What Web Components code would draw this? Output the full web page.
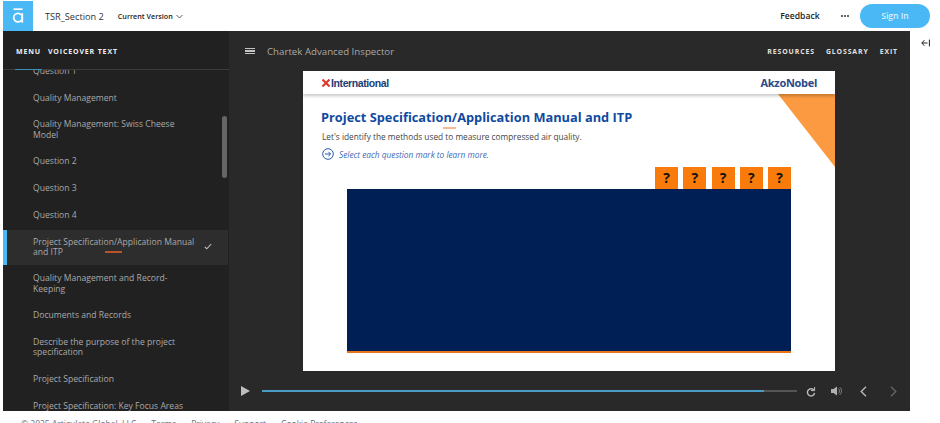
<!DOCTYPE html>
<html>
<head>
<meta charset="utf-8">
<title>TSR_Section 2</title>
<style>
    html, body { margin: 0; height: 423px; overflow: hidden; background: #ffffff; }
    body { font-family: "Open Sans", "Liberation Sans", sans-serif; display: flex; flex-direction: column; }
</style>
</head>
<body>
<top-bar></top-bar>
<div style="display:flex;height:380px;padding-left:3px;">
    <course-menu>
        <menu-item>Question 1</menu-item>
        <menu-item>Quality Management</menu-item>
        <menu-item>Quality Management: Swiss Cheese Model</menu-item>
        <menu-item>Question 2</menu-item>
        <menu-item>Question 3</menu-item>
        <menu-item>Question 4</menu-item>
        <menu-item active>Project Specification/Application Manual and ITP</menu-item>
        <menu-item>Quality Management and Record-Keeping</menu-item>
        <menu-item>Documents and Records</menu-item>
        <menu-item>Describe the purpose of the project specification</menu-item>
        <menu-item>Project Specification</menu-item>
        <menu-item>Project Specification: Key Focus Areas</menu-item>
    </course-menu>
    <player-pane></player-pane>
    <side-rail></side-rail>
</div>
<page-footer></page-footer>

<script>
class TopBar extends HTMLElement {
    connectedCallback() {
        this.attachShadow({mode: 'open'});
        this.shadowRoot.innerHTML = `
        <style>
            :host { display: flex; align-items: center; height: 31px; padding: 1px 10px 0 3px; box-sizing: border-box; color: #222; flex: none; }
            .logo { width: 30px; height: 30px; background: #4ab8f5; display: flex; align-items: center; justify-content: center; }
            .title { margin-left: 12px; font-size: 9.2px; color: #333; }
            .version { margin-left: 14px; font-size: 7.2px; font-weight: 600; display: flex; align-items: center; gap: 3px; }
            .spacer { flex: 1; }
            .feedback { font-size: 8.6px; font-weight: 600; }
            .dots { margin: 0 11px 0 21px; display: flex; gap: 1.2px; }
            .dots i { width: 2px; height: 2px; border-radius: 50%; background: #333; }
            .signin { width: 70px; height: 24px; border-radius: 12px; background: #4ab8f5; color: #d8f0fd; font-size: 8.6px; font-weight: 600; display: flex; align-items: center; justify-content: center; }
        </style>
        <div class="logo">
            <svg width="14" height="16" viewBox="0 0 14 16" fill="none" stroke="#fff" stroke-width="1.7">
                <path d="M2.5 1.2H11.5"/>
                <circle cx="7" cy="9.6" r="4.3"/>
                <path d="M11.3 5.2V14.6"/>
            </svg>
        </div>
        <span class="title">TSR_Section 2</span>
        <span class="version">Current Version
            <svg width="7" height="5" viewBox="0 0 7 5" fill="none" stroke="#333" stroke-width=".8"><path d="M.5 1l3 3 3-3"/></svg>
        </span>
        <span class="spacer"></span>
        <span class="feedback">Feedback</span>
        <span class="dots"><i></i><i></i><i></i></span>
        <span class="signin">Sign In</span>`;
    }
}

class CourseMenu extends HTMLElement {
    connectedCallback() {
        this.attachShadow({mode: 'open'});
        this.shadowRoot.innerHTML = `
        <style>
            :host { display: flex; flex-direction: column; width: 226px; flex: none; background: #212121; position: relative; overflow: hidden; }
            .tabs { flex: none; height: 39px; box-sizing: border-box; display: flex; gap: 7px; padding: 15.5px 0 0 13px; border-bottom: 1px solid #3c3c3c; position: relative;
                font-size: 7px; font-weight: 700; letter-spacing: .85px; color: #efefef; line-height: 10px; background: #212121; z-index: 1; }
            .tabs::after { content: ""; position: absolute; left: 12px; bottom: -1px; width: 27px; height: 1px; background: #3e8fb8; }
            .list { flex: 1; overflow: hidden; }
            .inner { margin-top: -12.5px; }
            .thumb { position: absolute; left: 219px; top: 85px; width: 5px; height: 62px; border-radius: 3px; background: #666; }
        </style>
        <div class="tabs"><span>MENU</span><span>VOICEOVER TEXT</span></div>
        <div class="list"><div class="inner"><slot></slot></div></div>
        <div class="thumb"></div>`;
    }
}

class MenuItem extends HTMLElement {
    connectedCallback() {
        this.attachShadow({mode: 'open'});
        this.shadowRoot.innerHTML = `
        <style>
            :host { display: flex; align-items: center; box-sizing: border-box; position: relative; width: 225px; min-height: 27px; padding: 7.75px 40px 7.75px 30px; font-size: 8.6px; line-height: 10.5px; color: #a9a9a9; }
            :host([active]) { margin: .75px 0; min-height: 35px; padding: 7px 32px 7px 30px; background: #2d2d2d; }
            :host([active]) .bar { position: absolute; left: 0; top: 0; bottom: 0; width: 4px; background: #4ab8f5; }
            :host([active]) .mark { position: absolute; left: 102px; top: 21px; width: 17px; height: 2px; background: #b9532a; }
            svg { position: absolute; left: 201px; top: 13px; }
        </style>
        ${this.hasAttribute('active') ? `<span class="bar"></span><span class="mark"></span>
        <svg width="8" height="7" viewBox="0 0 8 7" fill="none" stroke="#c4c4c4" stroke-width="1.1"><path d="M.8 3.8l2 2 4.4-4.8"/></svg>` : ''}
        <span><slot></slot></span>`;
    }
}

class PlayerPane extends HTMLElement {
    connectedCallback() {
        this.attachShadow({mode: 'open'});
        this.shadowRoot.innerHTML = `
        <style>
            :host { display: flex; flex-direction: column; flex: none; width: 681px; background: #292929; }
            .head { flex: none; height: 40px; display: flex; align-items: center; padding: 0 12px 0 16px; color: #a8a8a8; }
            .burger { display: flex; flex-direction: column; gap: 1.6px; margin-right: 12px; }
            .burger i { display: block; width: 10px; height: 1.2px; background: #c4c4c4; }
            .name { font-size: 9.7px; flex: 1; }
            .links { display: flex; gap: 11px; font-size: 6.9px; font-weight: 700; letter-spacing: .9px; color: #e2e2e2; padding-top: 1px; }
            .stage { flex: 1; display: flex; justify-content: flex-start; padding-left: 74px; }
            .controls { flex: none; height: 40px; display: flex; align-items: center; padding: 0 11px 0 12px; }
            .track { margin: 0 9px 0 12px; width: 535px; height: 2px; background: #555; }
            .track div { width: 502px; height: 100%; background: #4a9bc6; }
            .controls svg { flex: none; }
        </style>
        <div class="head">
            <span class="burger"><i></i><i></i><i></i></span>
            <span class="name">Chartek Advanced Inspector</span>
            <span class="links"><span>RESOURCES</span><span>GLOSSARY</span><span>EXIT</span></span>
        </div>
        <div class="stage"><slide-view></slide-view></div>
        <div class="controls">
            <svg width="9" height="10" viewBox="0 0 9 10"><path d="M0 0l9 5-9 5z" fill="#bdbdbd"/></svg>
            <div class="track"><div></div></div>
            <svg width="10" height="11" viewBox="0 0 10 11" fill="none" stroke="#bdbdbd" stroke-width="1.4"><path d="M8 4.2A3.6 3.6 0 1 0 8.6 7"/><path d="M8.6 1v3.6H5" stroke-width="1"/></svg>
            <svg width="11" height="10" viewBox="0 0 11 10" style="margin-left:15px"><path d="M0 3h2.5L6 .5v9L2.5 7H0z" fill="#b0b0b0"/><path d="M7.4 2.5a3.4 3.4 0 0 1 0 5M8.8 1.2a5 5 0 0 1 0 7.6" fill="none" stroke="#888" stroke-width=".9"/></svg>
            <svg width="7" height="11" viewBox="0 0 7 11" fill="none" stroke="#bdbdbd" stroke-width="1.3" style="margin-left:18px"><path d="M6 .8L1.2 5.5 6 10.2"/></svg>
            <svg width="7" height="11" viewBox="0 0 7 11" fill="none" stroke="#666" stroke-width="1.3" style="margin-left:23px"><path d="M1 .8l4.8 4.7L1 10.2"/></svg>
        </div>`;
    }
}

class SlideView extends HTMLElement {
    connectedCallback() {
        this.attachShadow({mode: 'open'});
        let boxes = '';
        for (let i = 0; i < 5; i++) boxes += '<span class="q">?</span>';
        this.shadowRoot.innerHTML = `
        <style>
            :host { display: flex; flex-direction: column; width: 532px; height: 300px; background: #fff; position: relative; overflow: hidden; }
            .brand { flex: none; height: 23px; display: flex; align-items: center; justify-content: space-between; padding: 0 18px 0 19px; box-shadow: 0 2px 3px rgba(0,0,0,.22); position: relative; z-index: 2; background: #fff; }
            .intl { display: flex; align-items: center; gap: 1px; font: 700 10.5px "Liberation Sans", sans-serif; letter-spacing: -.4px; color: #1c3d73; }
            .akzo { font: 700 11px "Open Sans", sans-serif; letter-spacing: -.3px; color: #2b4a86; }
            .tri { position: absolute; right: 0; top: 23px; width: 0; height: 0; border-top: 73px solid #fb9a40; border-left: 57px solid transparent; }
            .body { flex: 1; display: flex; flex-direction: column; padding: 14px 44px 18px 18px; position: relative; }
            h1 { margin: 0; font-size: 12.8px; line-height: 19px; font-weight: 700; color: #0f4a9f; }
            .mark { position: absolute; left: 140px; top: 33px; width: 13px; height: 2px; background: #f7b895; }
            p { margin: 3.5px 0 0 1px; font-size: 8.3px; line-height: 12px; color: #444; }
            .hint { margin: 5px 0 0 1px; display: flex; align-items: center; gap: 5px; font-size: 8.3px; line-height: 13px; font-style: italic; color: #3f69b3; }
            .row { margin-top: 6px; display: flex; justify-content: flex-end; gap: 5.25px; }
            .q { width: 23px; height: 22px; background: #f97b0b; color: #14120f; font: 700 14px/22px "Open Sans", sans-serif; text-align: center; }
            .panel { flex: 1; margin-left: 26px; background: #001f54; border-bottom: 2px solid #e8751a; }
        </style>
        <div class="brand">
            <span class="intl">
                <svg width="8" height="8" viewBox="0 0 8 8" stroke="#e2352b" stroke-width="2.1"><path d="M.5.5l7 7M7.5.5l-7 7"/></svg>
                International
            </span>
            <span class="akzo">AkzoNobel</span>
        </div>
        <div class="tri"></div>
        <div class="body">
            <h1>Project Specification/Application Manual and ITP</h1>
            <span class="mark"></span>
            <p>Let's identify the methods used to measure compressed air quality.</p>
            <div class="hint">
                <svg width="12" height="12" viewBox="0 0 12 12" fill="none" stroke="#2b5ca8" stroke-width="1"><circle cx="6" cy="6" r="5.3"/><path d="M3 6h5.6M6.4 3.8L8.6 6 6.4 8.2"/></svg>
                Select each question mark to learn more.
            </div>
            <div class="row">${boxes}</div>
            <div class="panel"></div>
        </div>`;
    }
}

class SideRail extends HTMLElement {
    connectedCallback() {
        this.attachShadow({mode: 'open'});
        this.shadowRoot.innerHTML = `
        <style>
            :host { display: block; flex: 1; padding: 8px 0 0 11px; }
            svg { display: block; }
        </style>
        <svg width="9" height="8" viewBox="0 0 9 8" fill="none" stroke="#222" stroke-width="1"><path d="M6.5 4H.8M3.4 1.2L.8 4l2.6 2.8M8.4 .6v6.8"/></svg>`;
    }
}

class PageFooter extends HTMLElement {
    connectedCallback() {
        this.attachShadow({mode: 'open'});
        this.shadowRoot.innerHTML = `
        <style>
            :host { display: flex; gap: 15px; flex: none; height: 12px; overflow: hidden; padding: 7px 0 0 21px; box-sizing: border-box; font-size: 8.5px; line-height: 11px; color: #6a7280; white-space: nowrap; }
        </style>
        <span>© 2025 Articulate Global, LLC</span><span>Terms</span><span>Privacy</span><span>Support</span><span>Cookie Preferences</span>`;
    }
}

customElements.define('top-bar', TopBar);
customElements.define('course-menu', CourseMenu);
customElements.define('menu-item', MenuItem);
customElements.define('player-pane', PlayerPane);
customElements.define('slide-view', SlideView);
customElements.define('side-rail', SideRail);
customElements.define('page-footer', PageFooter);
</script>
</body>
</html>
